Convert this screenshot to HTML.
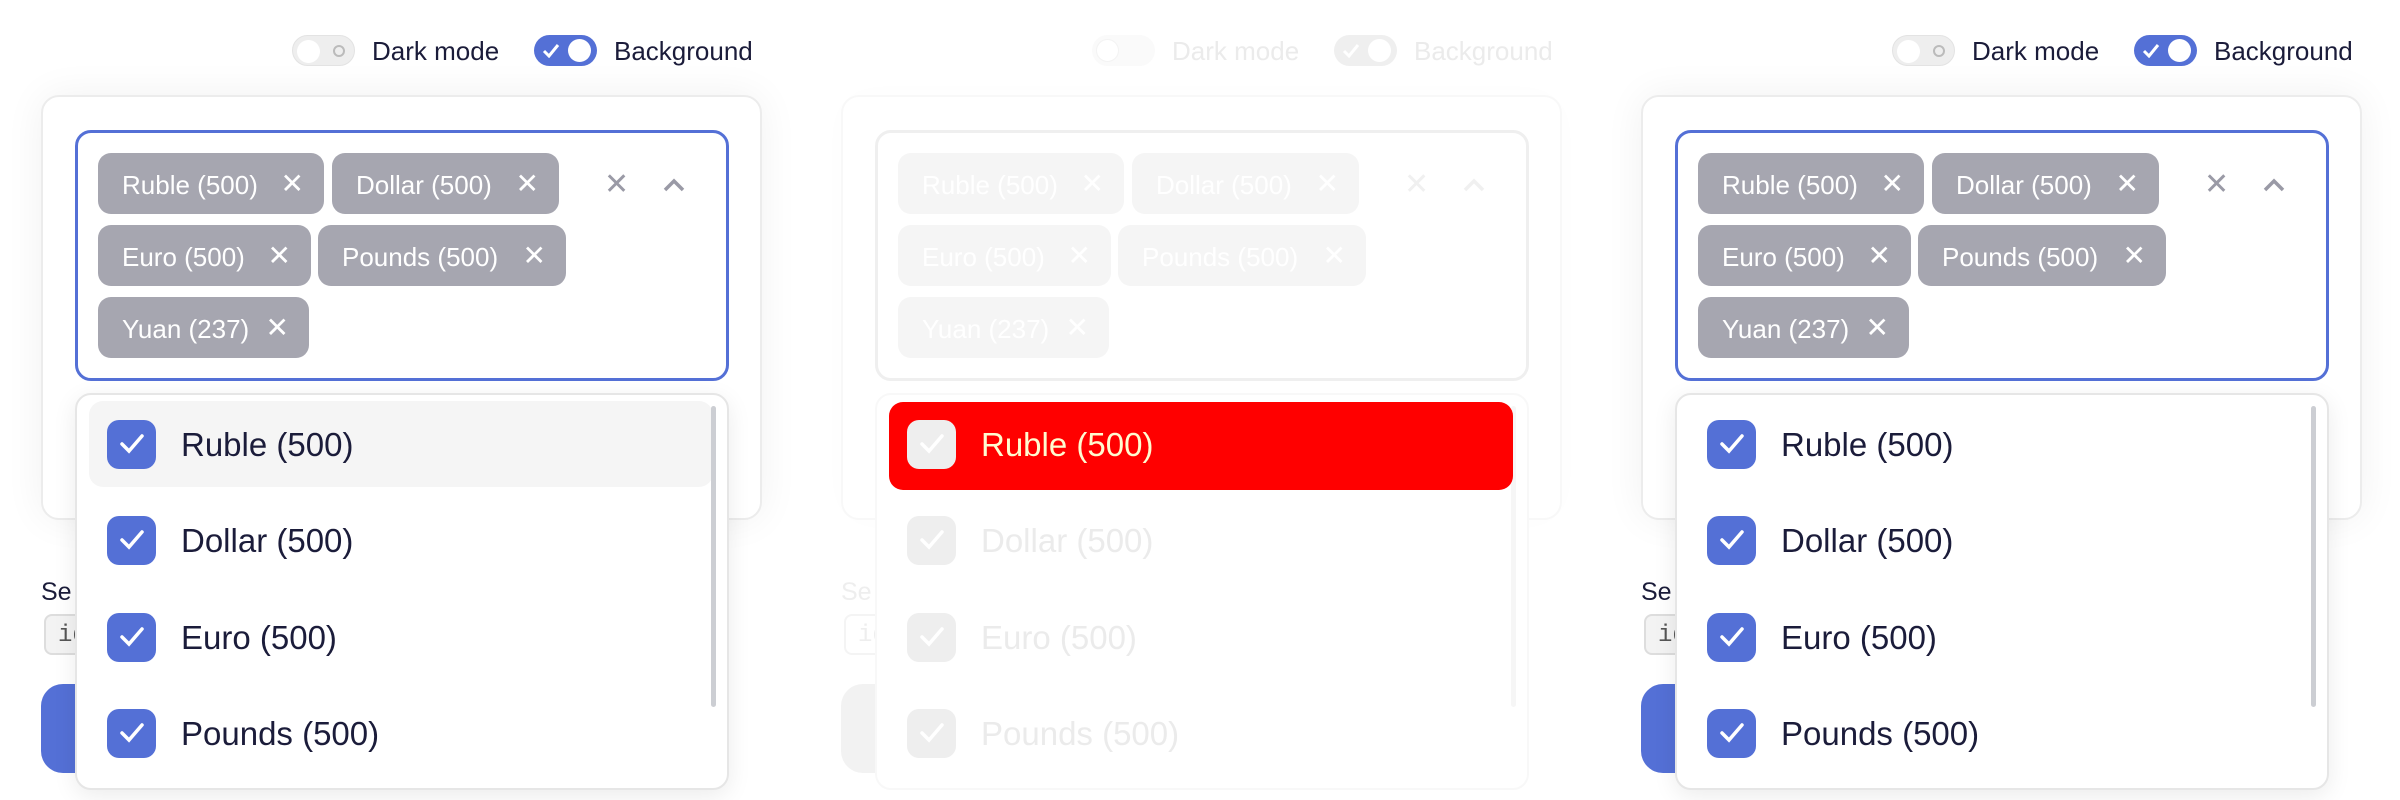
<!DOCTYPE html>
<html><head><style>
*{box-sizing:border-box;margin:0;padding:0}
body{width:2400px;height:800px;background:#fff;font-family:"Liberation Sans",sans-serif;overflow:hidden;position:relative}
.p{position:absolute;top:0;width:800px;height:800px}
.a{position:absolute}
.tg{width:63px;height:31px;border-radius:16px;top:35px}
.knob{position:absolute;top:4px;width:23px;height:23px;border-radius:50%;background:#fff}
.lbl{top:36px;font-size:26px;color:#1b1c3a}
.card{left:41px;top:95px;width:721px;height:425px;border:2px solid #ececec;border-radius:18px;background:#fff;box-shadow:0 0 40px rgba(0,0,0,.06)}
.sel{left:75px;top:130px;width:654px;height:251px;border:3px solid #5470d6;border-radius:16px;background:#fff}
.chip{height:61px;border-radius:13px;background:#a6a6b0;color:#fff;font-size:26px;line-height:64px;padding-left:24px}
.chip span{position:absolute;right:20px;top:0;font-size:28px;line-height:61px}
.dd{left:75px;top:393px;width:654px;height:397px;border:2px solid #e6e6e6;border-radius:16px;background:#fff;box-shadow:0 6px 24px rgba(0,0,0,.08)}
.it{left:89px;width:624px;height:86px;border-radius:14px}
.cb{left:107px;width:49px;height:49px;border-radius:12px;background:#5470d6}
.cb svg{position:absolute;left:12px;top:13px}
.tx{left:181px;font-size:33px;color:#1b1c3a;margin-top:-1px}
.fade .lbl,.fade .tx{color:#ebebeb}
</style></head><body>

<div class="p" style="left:0">
 <div class="a tg" style="left:292px;background:#eee;border:1px solid #e3e3e3"><div class="knob" style="left:4px"></div><div class="a" style="left:40px;top:9px;width:12px;height:12px;border:2px solid #bbb;border-radius:50%"></div></div>
 <div class="a lbl" style="left:372px">Dark mode</div>
 <div class="a tg" style="left:534px;background:#5470d6"><svg class="a" style="left:8px;top:8px" width="18" height="15"><path d="M2 8 L7 13 L16 2" stroke="#fff" stroke-width="3" fill="none"/></svg><div class="knob" style="left:34px"></div></div>
 <div class="a lbl" style="left:614px">Background</div>
 <div class="a card"></div>
 <div class="a" style="left:41px;top:578px;font-size:25px;color:#1b1c3a">Se</div>
 <div class="a" style="left:44px;top:614px;width:40px;height:41px;border:2px solid #ddd;background:#f3f3f3;border-radius:8px;font:24px 'Liberation Mono',monospace;color:#555;padding:6px 0 0 12px">id</div>
 <div class="a" style="left:41px;top:684px;width:60px;height:89px;background:#5470d6;border-radius:22px"></div>
 <div class="a sel"></div>
 <div class="a chip" style="left:98px;top:153px;width:226px">Ruble (500)<span>✕</span></div>
 <div class="a chip" style="left:332px;top:153px;width:227px">Dollar (500)<span>✕</span></div>
 <div class="a chip" style="left:98px;top:225px;width:213px">Euro (500)<span>✕</span></div>
 <div class="a chip" style="left:318px;top:225px;width:248px">Pounds (500)<span>✕</span></div>
 <div class="a chip" style="left:98px;top:297px;width:211px">Yuan (237)<span>✕</span></div>
 <div class="a" style="left:604px;top:167px;font-size:30px;color:#9a9aa6">✕</div>
 <svg class="a" style="left:662px;top:177px" width="24" height="16"><path d="M3 13 L12 4 L21 13" stroke="#9a9aa6" stroke-width="3.5" fill="none"/></svg>
 <div class="a dd"></div>
 <div class="a it" style="top:401px;background:#f5f5f5"></div>
 <div class="a" style="left:711px;top:406px;width:5px;height:301px;border-radius:3px;background:#ccced3"></div>
 <div class="a cb" style="top:420px"><svg width="26" height="22"><path d="M3 11 L10 18 L23 3" stroke="#fff" stroke-width="3.5" fill="none" stroke-linecap="round"/></svg></div>
 <div class="a tx" style="top:427px">Ruble (500)</div>
 <div class="a cb" style="top:516px"><svg width="26" height="22"><path d="M3 11 L10 18 L23 3" stroke="#fff" stroke-width="3.5" fill="none" stroke-linecap="round"/></svg></div>
 <div class="a tx" style="top:523px">Dollar (500)</div>
 <div class="a cb" style="top:613px"><svg width="26" height="22"><path d="M3 11 L10 18 L23 3" stroke="#fff" stroke-width="3.5" fill="none" stroke-linecap="round"/></svg></div>
 <div class="a tx" style="top:620px">Euro (500)</div>
 <div class="a cb" style="top:709px"><svg width="26" height="22"><path d="M3 11 L10 18 L23 3" stroke="#fff" stroke-width="3.5" fill="none" stroke-linecap="round"/></svg></div>
 <div class="a tx" style="top:716px">Pounds (500)</div>
</div>

<div class="p fade" style="left:800px">
 <div class="a tg" style="left:292px;background:#fafafa"><div class="knob" style="left:4px;border:1px solid #f3f3f3"></div></div>
 <div class="a lbl" style="left:372px">Dark mode</div>
 <div class="a tg" style="left:534px;background:#efefef"><svg class="a" style="left:8px;top:8px" width="18" height="15"><path d="M2 8 L7 13 L16 2" stroke="#fff" stroke-width="3" fill="none"/></svg><div class="knob" style="left:34px"></div></div>
 <div class="a lbl" style="left:614px">Background</div>
 <div class="a card" style="border-color:#f8f8f8;box-shadow:0 0 40px rgba(0,0,0,.01)"></div>
 <div class="a" style="left:41px;top:578px;font-size:25px;color:#eee">Se</div>
 <div class="a" style="left:44px;top:614px;width:40px;height:41px;border:2px solid #f4f4f4;border-radius:8px;font:24px 'Liberation Mono',monospace;color:#eee;padding:6px 0 0 12px">id</div>
 <div class="a" style="left:41px;top:684px;width:60px;height:89px;background:#f2f2f2;border-radius:22px"></div>
 <div class="a sel" style="border-color:#efefef"></div>
 <div class="a chip" style="left:98px;top:153px;width:226px;background:#f5f5f5">Ruble (500)<span>✕</span></div>
 <div class="a chip" style="left:332px;top:153px;width:227px;background:#f5f5f5">Dollar (500)<span>✕</span></div>
 <div class="a chip" style="left:98px;top:225px;width:213px;background:#f5f5f5">Euro (500)<span>✕</span></div>
 <div class="a chip" style="left:318px;top:225px;width:248px;background:#f5f5f5">Pounds (500)<span>✕</span></div>
 <div class="a chip" style="left:98px;top:297px;width:211px;background:#f5f5f5">Yuan (237)<span>✕</span></div>
 <div class="a" style="left:604px;top:167px;font-size:30px;color:#f0f0f0">✕</div>
 <svg class="a" style="left:662px;top:177px" width="24" height="16"><path d="M3 13 L12 4 L21 13" stroke="#f0f0f0" stroke-width="3.5" fill="none"/></svg>
 <div class="a dd" style="border-color:#f8f8f8;box-shadow:none"></div>
 <div class="a" style="left:711px;top:406px;width:5px;height:301px;border-radius:3px;background:#f6f6f6"></div>
 <div class="a it" style="top:402px;height:88px;background:#ff0000"></div>
 <div class="a cb" style="top:420px;background:#eee"><svg width="26" height="22"><path d="M3 11 L10 18 L23 3" stroke="#fff" stroke-width="3.5" fill="none" stroke-linecap="round"/></svg></div>
 <div class="a tx" style="top:427px;color:#fffbd0">Ruble (500)</div>
 <div class="a cb" style="top:516px;background:#eee"><svg width="26" height="22"><path d="M3 11 L10 18 L23 3" stroke="#fff" stroke-width="3.5" fill="none" stroke-linecap="round"/></svg></div>
 <div class="a tx" style="top:523px">Dollar (500)</div>
 <div class="a cb" style="top:613px;background:#eee"><svg width="26" height="22"><path d="M3 11 L10 18 L23 3" stroke="#fff" stroke-width="3.5" fill="none" stroke-linecap="round"/></svg></div>
 <div class="a tx" style="top:620px">Euro (500)</div>
 <div class="a cb" style="top:709px;background:#eee"><svg width="26" height="22"><path d="M3 11 L10 18 L23 3" stroke="#fff" stroke-width="3.5" fill="none" stroke-linecap="round"/></svg></div>
 <div class="a tx" style="top:716px">Pounds (500)</div>
</div>

<div class="p" style="left:1600px">
 <div class="a tg" style="left:292px;background:#eee;border:1px solid #e3e3e3"><div class="knob" style="left:4px"></div><div class="a" style="left:40px;top:9px;width:12px;height:12px;border:2px solid #bbb;border-radius:50%"></div></div>
 <div class="a lbl" style="left:372px">Dark mode</div>
 <div class="a tg" style="left:534px;background:#5470d6"><svg class="a" style="left:8px;top:8px" width="18" height="15"><path d="M2 8 L7 13 L16 2" stroke="#fff" stroke-width="3" fill="none"/></svg><div class="knob" style="left:34px"></div></div>
 <div class="a lbl" style="left:614px">Background</div>
 <div class="a card"></div>
 <div class="a" style="left:41px;top:578px;font-size:25px;color:#1b1c3a">Se</div>
 <div class="a" style="left:44px;top:614px;width:40px;height:41px;border:2px solid #ddd;background:#f3f3f3;border-radius:8px;font:24px 'Liberation Mono',monospace;color:#555;padding:6px 0 0 12px">id</div>
 <div class="a" style="left:41px;top:684px;width:60px;height:89px;background:#5470d6;border-radius:22px"></div>
 <div class="a sel"></div>
 <div class="a chip" style="left:98px;top:153px;width:226px">Ruble (500)<span>✕</span></div>
 <div class="a chip" style="left:332px;top:153px;width:227px">Dollar (500)<span>✕</span></div>
 <div class="a chip" style="left:98px;top:225px;width:213px">Euro (500)<span>✕</span></div>
 <div class="a chip" style="left:318px;top:225px;width:248px">Pounds (500)<span>✕</span></div>
 <div class="a chip" style="left:98px;top:297px;width:211px">Yuan (237)<span>✕</span></div>
 <div class="a" style="left:604px;top:167px;font-size:30px;color:#9a9aa6">✕</div>
 <svg class="a" style="left:662px;top:177px" width="24" height="16"><path d="M3 13 L12 4 L21 13" stroke="#9a9aa6" stroke-width="3.5" fill="none"/></svg>
 <div class="a dd"></div>
 <div class="a" style="left:711px;top:406px;width:5px;height:301px;border-radius:3px;background:#ccced3"></div>
 <div class="a cb" style="top:420px"><svg width="26" height="22"><path d="M3 11 L10 18 L23 3" stroke="#fff" stroke-width="3.5" fill="none" stroke-linecap="round"/></svg></div>
 <div class="a tx" style="top:427px">Ruble (500)</div>
 <div class="a cb" style="top:516px"><svg width="26" height="22"><path d="M3 11 L10 18 L23 3" stroke="#fff" stroke-width="3.5" fill="none" stroke-linecap="round"/></svg></div>
 <div class="a tx" style="top:523px">Dollar (500)</div>
 <div class="a cb" style="top:613px"><svg width="26" height="22"><path d="M3 11 L10 18 L23 3" stroke="#fff" stroke-width="3.5" fill="none" stroke-linecap="round"/></svg></div>
 <div class="a tx" style="top:620px">Euro (500)</div>
 <div class="a cb" style="top:709px"><svg width="26" height="22"><path d="M3 11 L10 18 L23 3" stroke="#fff" stroke-width="3.5" fill="none" stroke-linecap="round"/></svg></div>
 <div class="a tx" style="top:716px">Pounds (500)</div>
</div>
</body></html>
